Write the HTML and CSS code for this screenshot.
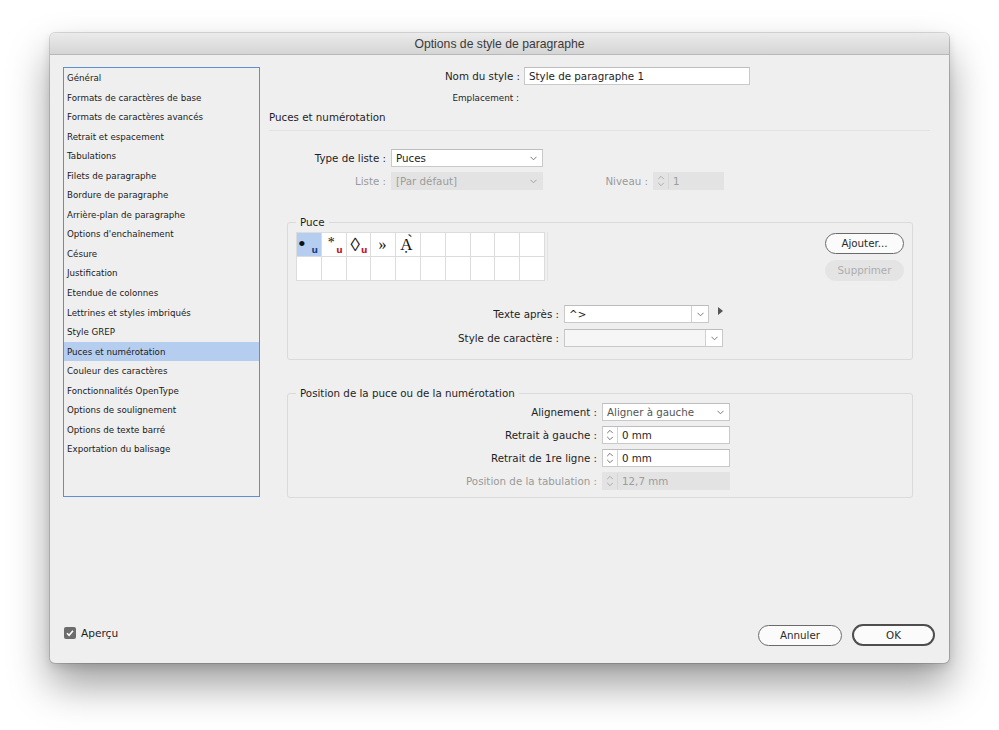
FILE: index.html
```html
<!DOCTYPE html>
<html lang="fr">
<head>
<meta charset="utf-8">
<title>Options de style de paragraphe</title>
<link rel="stylesheet" href="styles.css">
</head>
<body>
<div class="window">
  <div class="titlebar">Options de style de paragraphe</div>
  <div class="content">
    <div class="columns">
      <ul class="sidebar">
        <li>Général</li>
        <li>Formats de caractères de base</li>
        <li>Formats de caractères avancés</li>
        <li>Retrait et espacement</li>
        <li>Tabulations</li>
        <li>Filets de paragraphe</li>
        <li>Bordure de paragraphe</li>
        <li>Arrière-plan de paragraphe</li>
        <li>Options d'enchaînement</li>
        <li>Césure</li>
        <li>Justification</li>
        <li>Etendue de colonnes</li>
        <li>Lettrines et styles imbriqués</li>
        <li>Style GREP</li>
        <li class="selected">Puces et numérotation</li>
        <li>Couleur des caractères</li>
        <li>Fonctionnalités OpenType</li>
        <li>Options de soulignement</li>
        <li>Options de texte barré</li>
        <li>Exportation du balisage</li>
      </ul>

      <div class="main">
        <div class="row">
          <span class="lbl lbl-name">Nom du style :</span>
          <div class="field name-field">Style de paragraphe 1</div>
        </div>
        <div class="loc-row"><span class="lbl lbl-loc">Emplacement :</span></div>
        <div class="section-title">Puces et numérotation</div>
        <div class="separator"></div>

        <div class="list-rows">
          <div class="row">
            <span class="lbl lbl-list">Type de liste :</span>
            <div class="select w-list"><span class="val">Puces</span>
              <svg class="chev" width="7" height="5" viewBox="0 0 7 5"><path d="M0.5 0.8 L3.5 3.8 L6.5 0.8" fill="none" stroke="#7a7a7a" stroke-width="1"/></svg>
            </div>
          </div>
          <div class="row">
            <span class="lbl lbl-list dis">Liste :</span>
            <div class="select w-list is-dis"><span class="val">[Par défaut]</span>
              <svg class="chev" width="7" height="5" viewBox="0 0 7 5"><path d="M0.5 0.8 L3.5 3.8 L6.5 0.8" fill="none" stroke="#a0a0a0" stroke-width="1"/></svg>
            </div>
            <span class="lbl lbl-niveau dis">Niveau :</span>
            <div class="spinner w-niveau is-dis">
              <span class="arrows"><svg width="15" height="18" viewBox="0 0 15 18"><path d="M4.5 7 L7.5 4 L10.5 7 M4.5 11 L7.5 14 L10.5 11" fill="none" stroke="#a8a8a8" stroke-width="1"/></svg></span>
              <span class="val">1</span>
            </div>
          </div>
        </div>

        <fieldset class="group puce-group">
          <legend>Puce</legend>
          <div class="puce-top">
            <div class="grid-wrap">
              <div class="glyph-grid">
                <div class="cell sel"><span class="g g-bullet">•</span><span class="u u-blue">u</span></div>
                <div class="cell"><span class="g g-star">*</span><span class="u u-star">u</span></div>
                <div class="cell"><span class="g g-loz">◊</span><span class="u">u</span></div>
                <div class="cell"><span class="g g-guil">»</span></div>
                <div class="cell"><span class="g g-a">Ạ̀</span></div>
                <div class="cell"></div>
                <div class="cell"></div>
                <div class="cell"></div>
                <div class="cell"></div>
                <div class="cell"></div>
                <div class="cell"></div>
                <div class="cell"></div>
                <div class="cell"></div>
                <div class="cell"></div>
                <div class="cell"></div>
                <div class="cell"></div>
                <div class="cell"></div>
                <div class="cell"></div>
                <div class="cell"></div>
                <div class="cell"></div>
              </div>
              <div class="scroll-track"></div>
            </div>
            <div class="btn-col">
              <button class="btn">Ajouter...</button>
              <button class="btn btn-dis">Supprimer</button>
            </div>
          </div>
          <div class="form-rows">
            <div class="row">
              <span class="lbl lbl-puce">Texte après :</span>
              <div class="combo w-texte">
                <span class="val">^&gt;</span>
                <span class="seg"><svg width="7" height="5" viewBox="0 0 7 5"><path d="M0.5 0.8 L3.5 3.8 L6.5 0.8" fill="none" stroke="#7a7a7a" stroke-width="1"/></svg></span>
              </div>
              <svg class="tri" width="5" height="8" viewBox="0 0 5 8"><path d="M0 0 L5 4 L0 8 Z" fill="#555"/></svg>
            </div>
            <div class="row">
              <span class="lbl lbl-puce">Style de caractère :</span>
              <div class="combo w-style empty">
                <span class="val"></span>
                <span class="seg"><svg width="7" height="5" viewBox="0 0 7 5"><path d="M0.5 0.8 L3.5 3.8 L6.5 0.8" fill="none" stroke="#7a7a7a" stroke-width="1"/></svg></span>
              </div>
            </div>
          </div>
        </fieldset>

        <fieldset class="group pos-group">
          <legend>Position de la puce ou de la numérotation</legend>
          <div class="form-rows pos-rows">
            <div class="row">
              <span class="lbl lbl-pos">Alignement :</span>
              <div class="select w-pos"><span class="val grey">Aligner à gauche</span>
                <svg class="chev" width="7" height="5" viewBox="0 0 7 5"><path d="M0.5 0.8 L3.5 3.8 L6.5 0.8" fill="none" stroke="#7a7a7a" stroke-width="1"/></svg>
              </div>
            </div>
            <div class="row">
              <span class="lbl lbl-pos">Retrait à gauche :</span>
              <div class="spinner w-pos">
                <span class="arrows"><svg width="15" height="18" viewBox="0 0 15 18"><path d="M4.5 7 L7.5 4 L10.5 7 M4.5 11 L7.5 14 L10.5 11" fill="none" stroke="#6a6a6a" stroke-width="1"/></svg></span>
                <span class="val">0 mm</span>
              </div>
            </div>
            <div class="row">
              <span class="lbl lbl-pos">Retrait de 1re ligne :</span>
              <div class="spinner w-pos">
                <span class="arrows"><svg width="15" height="18" viewBox="0 0 15 18"><path d="M4.5 7 L7.5 4 L10.5 7 M4.5 11 L7.5 14 L10.5 11" fill="none" stroke="#6a6a6a" stroke-width="1"/></svg></span>
                <span class="val">0 mm</span>
              </div>
            </div>
            <div class="row">
              <span class="lbl lbl-pos dis">Position de la tabulation :</span>
              <div class="spinner w-pos is-dis">
                <span class="arrows"><svg width="15" height="18" viewBox="0 0 15 18"><path d="M4.5 7 L7.5 4 L10.5 7 M4.5 11 L7.5 14 L10.5 11" fill="none" stroke="#a8a8a8" stroke-width="1"/></svg></span>
                <span class="val">12,7 mm</span>
              </div>
            </div>
          </div>
        </fieldset>
      </div>
    </div>

    <div class="footer">
      <label class="check">
        <span class="box"><svg width="12" height="12" viewBox="0 0 12 12"><path d="M3 6.2 L5.1 8.3 L9 3.8" fill="none" stroke="#fff" stroke-width="1.6"/></svg></span>
        <span>Aperçu</span>
      </label>
      <div class="actions">
        <button class="btn btn-cancel">Annuler</button>
        <button class="btn btn-ok">OK</button>
      </div>
    </div>
  </div>
</div>
</body>
</html>
```

FILE: styles.css
```css
* { box-sizing: border-box; }
html, body { margin: 0; }
html { background: #ffffff; }
body {
  background: #ffffff;
  min-height: 730px;
  padding: 33px 50px 0;
  font-family: "DejaVu Sans", sans-serif;
  font-size: 10.3px;
  color: #1e1e1e;
}
.window {
  height: 630px;
  border-radius: 5px;
  background: #efefef;
  box-shadow: 0 0 0 1px rgba(0,0,0,0.13), 1px 0 0 0 rgba(0,0,0,0.08), 0 22px 40px rgba(0,0,0,0.38), 0 4px 10px rgba(0,0,0,0.12);
  display: flex;
  flex-direction: column;
  overflow: hidden;
}
.titlebar {
  height: 22px;
  flex: none;
  background: linear-gradient(#ebebeb, #d5d5d5);
  border-bottom: 1px solid #b8b8b8;
  font-family: "Liberation Sans", Arial, sans-serif;
  font-size: 12.2px;
  line-height: 22px;
  color: #3a3a3a;
  text-align: center;
}
.content {
  flex: 1;
  display: flex;
  flex-direction: column;
  padding: 12px 14px 17px 13px;
}
.columns { display: flex; align-items: flex-start; }

.sidebar {
  list-style: none;
  margin: 0;
  padding: 0;
  width: 197px;
  height: 430px;
  flex: none;
  border: 1px solid #5d8fd4;
  font-size: 8.7px;
  color: #1a1a1a;
}
.sidebar li {
  height: 19.55px;
  line-height: 20.5px;
  padding-left: 3px;
  white-space: nowrap;
}
.sidebar li.selected { background: #b5cef0; }

.main { margin-left: 9px; width: 661px; flex: none; }
.row { display: flex; align-items: center; height: 18px; }
.lbl { flex: none; text-align: right; white-space: nowrap; }
.dis { color: #9a9a9a; }

.lbl-name { width: 251px; margin-right: 4px; }
.field {
  height: 18px;
  background: #fff;
  border: 1px solid #c9c9c9;
  border-top-color: #bdbdbd;
  padding-left: 4px;
  line-height: 16px;
  white-space: nowrap;
}
.name-field { width: 226px; }

.loc-row { margin-top: 6px; height: 13px; line-height: 14px; display: flex; }
.lbl-loc { width: 250px; font-size: 8.8px; }
.section-title { margin-top: 6px; height: 14px; line-height: 14px; }
.separator { margin-top: 6px; height: 1px; background: #e2e2e2; }

.list-rows { margin-top: 18px; display: flex; flex-direction: column; gap: 5px; }
.lbl-list { width: 117px; margin-right: 5px; }
.lbl-niveau { width: 105px; margin-right: 5px; }

.select, .combo, .spinner {
  height: 18px;
  display: flex;
  align-items: center;
  background: #fff;
  border: 1px solid #c9c9c9;
  border-top-color: #bdbdbd;
  flex: none;
  white-space: nowrap;
}
.select .val { padding-left: 4px; }
.select .chev { margin-left: auto; margin-right: 5px; }
.val.grey { color: #555; }
.w-list { width: 152px; }
.w-niveau { width: 71px; }
.w-pos { width: 128px; }
.is-dis { background: #e3e3e3; border-color: #e3e3e3; color: #9c9c9c; }

.spinner .arrows {
  width: 15px;
  height: 16px;
  flex: none;
  border-right: 1px solid #d3d3d3;
  display: flex;
  align-items: center;
  justify-content: center;
}
.spinner .arrows svg { display: block; }
.spinner .val { padding-left: 4px; }
.spinner.is-dis .arrows { border-right-color: #d6d6d6; }

.group {
  margin: 0;
  margin-left: 18px;
  width: 626px;
  border: 1px solid #dadada;
  border-radius: 3px;
  min-inline-size: 0;
}
.group legend {
  padding: 0 4px;
  height: 14px;
  line-height: 14px;
  color: #1e1e1e;
}
.puce-group { margin-top: 25px; padding: 3px 8px 12px 8px; }
.pos-group { margin-top: 26px; padding: 3px 8px 7px 8px; }

.puce-top { display: flex; justify-content: space-between; align-items: flex-start; }
.grid-wrap { display: flex; align-items: stretch; }
.glyph-grid {
  display: grid;
  grid-template-columns: repeat(10, 23.8px);
  grid-template-rows: repeat(2, 23px);
  gap: 1px;
  background: #dcdcdc;
  border: 1px solid #dcdcdc;
}
.scroll-track { width: 4px; margin-left: 2px; border-left: 1px solid #e4e4e4; }
.cell {
  background: #fff;
  position: relative;
  font-family: "Liberation Serif", "DejaVu Serif", serif;
  color: #111;
}
.cell.sel { background: #b5cef0; }
.g { position: absolute; }
.g-bullet { left: 1px; top: 0px; font-size: 22px; line-height: 22px; }
.g-star { left: 6px; top: 3px; font-size: 14px; line-height: 14px; }
.g-loz { left: 4px; top: 2px; font-size: 19px; line-height: 19px; }
.g-guil { left: 7px; top: 3px; font-size: 16px; line-height: 17px; }
.g-a { left: 4px; top: 3px; font-size: 17px; line-height: 17px; }
.u {
  position: absolute;
  right: 3px;
  bottom: 1px;
  font-family: "DejaVu Sans", sans-serif;
  font-size: 9px;
  line-height: 10px;
  font-weight: bold;
  color: #c0182e;
}
.u.u-star { right: 3px; }
.u.u-blue { color: #1f3f86; }

.btn-col { display: flex; flex-direction: column; gap: 6px; margin-top: 1px; }
.btn {
  font-family: "DejaVu Sans", sans-serif;
  font-size: 10.3px;
  color: #2a2a2a;
  background: #fbfbfb;
  border: 1px solid #6a6a6a;
  border-radius: 11px;
  width: 79px;
  height: 21px;
  padding: 0;
  line-height: 19px;
}
.btn-dis { background: #e4e4e4; border-color: #e4e4e4; color: #adadad; }

.form-rows { display: flex; flex-direction: column; gap: 6px; margin-top: 24px; }
.lbl-puce { width: 263px; margin-right: 5px; }
.combo .val { flex: 1; padding-left: 4px; }
.combo .seg {
  width: 17px;
  height: 16px;
  border-left: 1px solid #d0d0d0;
  display: flex;
  align-items: center;
  justify-content: center;
  flex: none;
}
.combo.empty .val { background: #f6f6f6; height: 16px; }
.w-texte { width: 145px; }
.w-style { width: 159px; }
.tri { margin-left: 9px; margin-top: -7px; }

.pos-rows { margin-top: 0; gap: 5px; }
.lbl-pos { width: 301px; margin-right: 5px; }

.footer {
  margin-top: auto;
  height: 22px;
  display: flex;
  align-items: center;
  justify-content: space-between;
}
.check { display: flex; align-items: center; gap: 5px; margin-left: 1px; margin-top: -5px; font-size: 10.6px; }
.check .box {
  width: 12px;
  height: 12px;
  border-radius: 2px;
  background: #6c6c6c;
  display: block;
}
.check .box svg { display: block; }
.actions { display: flex; gap: 10px; align-items: center; }
.btn-cancel { width: 84px; height: 21px; }
.btn-ok { width: 83px; height: 22px; border: 2px solid #4e4e4e; line-height: 18px; }
```
